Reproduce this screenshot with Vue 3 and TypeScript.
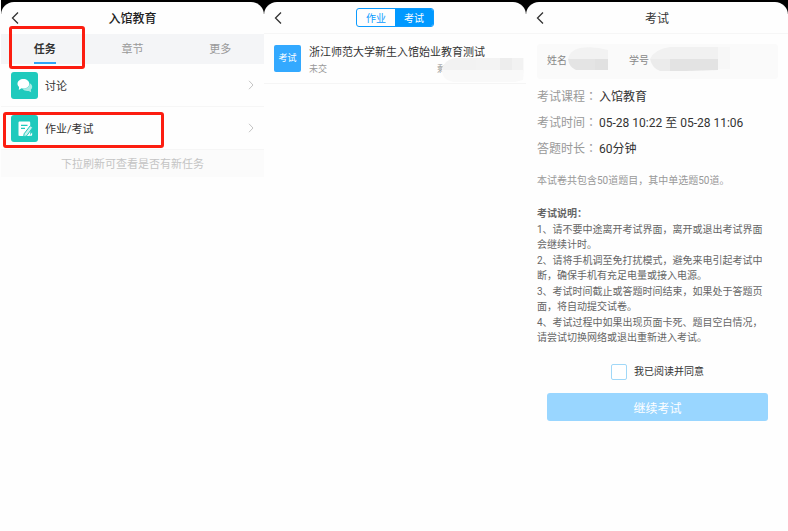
<script setup lang="ts">
import { ref } from 'vue'

interface Detail {
  label: string
  value: string
}

const tabs: string[] = ['任务', '章节', '更多']
const activeTab = ref<string>('任务')
const kinds: string[] = ['作业', '考试']
const activeKind = ref<string>('考试')
const agreed = ref<boolean>(false)

const details: Detail[] = [
  { label: '考试课程', value: '入馆教育' },
  { label: '考试时间', value: '05-28 10:22 至 05-28 11:06' },
  { label: '答题时长', value: '60分钟' },
]

const rules: string[][] = [
  ['1、请不要中途离开考试界面，离开或退出考试界面', '会继续计时。'],
  ['2、请将手机调至免打扰模式，避免来电引起考试中', '断，确保手机有充足电量或接入电源。'],
  ['3、考试时间截止或答题时间结束，如果处于答题页', '面，将自动提交试卷。'],
  ['4、考试过程中如果出现页面卡死、题目空白情况，', '请尝试切换网络或退出重新进入考试。'],
]
</script>

<template>
  <main class="board">
    <section class="phone first">
      <div class="screen">
        <header class="bar">
          <button class="back" type="button" aria-label="返回">
            <svg viewBox="0 0 8 14" width="8" height="14"><path d="M7 1.5 1.5 7 7 12.5" /></svg>
          </button>
          <h1 class="title strong">入馆教育</h1>
        </header>
        <nav class="tabs">
          <button
            v-for="tab in tabs"
            :key="tab"
            type="button"
            class="tab"
            :class="{ active: tab === activeTab }"
            @click="activeTab = tab"
          >
            <span class="tab-text">{{ tab }}</span>
          </button>
          <span class="mark mark-tab"></span>
        </nav>
        <a class="entry" href="#discuss">
          <span class="tile">
            <svg viewBox="0 0 27 27" width="27" height="27">
              <path class="soft" d="M18.8 11.2c1.500.8 2.400 2 2.400 3.500 0 1.200-.5 2.200-1.400 3l.4 2.600-2.500-1.400c-2.600.4-5-.4-6.100-2.100 4 .2 7.100-2 7.200-5.600z" />
              <path class="white" d="M12.400 7c3.300 0 5.900 2.100 5.900 4.800s-2.600 4.800-5.900 4.800c-.7 0-1.300-.1-1.900-.3l-2.700 1.600.3-2.900c-1-.8-1.600-1.900-1.600-3.200C6.500 9.100 9.100 7 12.400 7z" />
            </svg>
          </span>
          <span class="entry-text">讨论</span>
          <svg class="arrow" viewBox="0 0 6 10" width="6" height="10"><path d="M1 .8 5 5 1 9.200" /></svg>
        </a>
        <a class="entry" href="#exam">
          <span class="tile">
            <svg viewBox="0 0 27 27" width="27" height="27">
              <path class="white" d="M8.700 6.500h9.300c.8 0 1.200.4 1.200 1.200v12c0 .8-.4 1.200-1.200 1.200H8.700c-.8 0-1.200-.4-1.200-1.200v-12c0-.8.4-1.200 1.200-1.200z" />
              <path class="teal" d="M10 10.300h6.500M10 13.300h4" />
              <path class="pencil" d="m19.200 10.800 2.500 1.700-5.900 8.200-3.100 1.300.4-3.200z" />
              <path class="white" d="m18.600 20.800 2.500-3.400v2.600c0 .6-.3.800-.8.800z" />
            </svg>
          </span>
          <span class="entry-text">作业/考试</span>
          <svg class="arrow" viewBox="0 0 6 10" width="6" height="10"><path d="M1 .8 5 5 1 9.200" /></svg>
          <span class="mark mark-entry"></span>
        </a>
        <p class="hint">下拉刷新可查看是否有新任务</p>
      </div>
    </section>

    <section class="phone">
      <div class="screen">
        <header class="bar ruled">
          <button class="back" type="button" aria-label="返回">
            <svg viewBox="0 0 8 14" width="8" height="14"><path d="M7 1.500 1.500 7 7 12.500" /></svg>
          </button>
          <div class="switch">
            <button
              v-for="kind in kinds"
              :key="kind"
              type="button"
              class="kind"
              :class="{ on: kind === activeKind }"
              @click="activeKind = kind"
            >{{ kind }}</button>
          </div>
        </header>
        <a class="exam" href="#paper">
          <span class="badge">考试</span>
          <span class="exam-body">
            <span class="exam-name">浙江师范大学新生入馆始业教育测试</span>
            <span class="exam-meta">
              <span>未交</span>
              <span class="remain">剩</span>
            </span>
          </span>
          <svg class="mosaic" viewBox="0 0 82 25" width="82" height="25">
            <path fill="#f9f9f9" d="M12 0h70v12l-1 10-8 2H12Q0 22 0 12 2 2 12 0z" />
            <path fill="#f2f2f2" d="M13 0h21v12H0Q2 2 13 0z" />
            <path fill="#f3f3f3" d="M34 0h24v12H34z" />
            <path fill="#ededed" d="M58 0h12v12H58z" />
            <path fill="#f2f2f2" d="M70 0h11v12H70z" />
          </svg>
        </a>
      </div>
    </section>

    <section class="phone">
      <div class="screen">
        <header class="bar ruled">
          <button class="back" type="button" aria-label="返回">
            <svg viewBox="0 0 8 14" width="8" height="14"><path d="M7 1.500 1.500 7 7 12.500" /></svg>
          </button>
          <h1 class="title">考试</h1>
        </header>
        <div class="content">
          <div class="who">
            <span class="who-item">
              姓名
              <svg viewBox="0 0 40 24" width="40" height="24">
                <path fill="#f2f2f2" d="M12 1q14-2 28 2v9H0Q2 3 12 1z" />
                <path fill="#e4e4e4" d="M0 12h40v11H8Q1 20 0 12z" />
                <path fill="#e1e1e1" d="M27 12h13v11H27z" />
              </svg>
            </span>
            <span class="who-item">
              学号
              <svg viewBox="0 0 80 24" width="80" height="24">
                <path fill="#f1f1f1" d="M20 0h48v12H0Q5 2 20 0z" />
                <path fill="#f7f7f7" d="M68 0h12v22H68z" />
                <path fill="#ebebeb" d="M0 12h20v12H10Q2 21 0 12z" />
                <path fill="#e3e3e3" d="M20 12h48v11l-32 1H20z" />
              </svg>
            </span>
          </div>
          <dl class="details">
            <div v-for="item in details" :key="item.label" class="detail">
              <dt>{{ item.label }}<span class="colon">：</span></dt>
              <dd>{{ item.value }}</dd>
            </div>
          </dl>
          <p class="summary">本试卷共包含50道题目，其中单选题50道。</p>
          <div class="rules">
            <h2>考试说明：</h2>
            <p v-for="rule in rules" :key="rule[0]">
              <span v-for="line in rule" :key="line">{{ line }}</span>
            </p>
          </div>
          <label class="agree">
            <input v-model="agreed" type="checkbox" />
            <span>我已阅读并同意</span>
          </label>
          <button class="go" type="button">继续考试</button>
        </div>
      </div>
    </section>
  </main>
</template>

<style>
body {
  margin: 0;
  background: #fefefe;
}
</style>

<style scoped>
* {
  box-sizing: border-box;
}
.board {
  display: grid;
  grid-template-columns: 264fr 262fr 262fr;
  min-height: 100vh;
  font-family: Roboto, "Noto Sans CJK SC", sans-serif;
  color: #333;
}
button {
  font: inherit;
  color: inherit;
  border: 0;
  padding: 0;
  background: none;
}
a {
  color: inherit;
  text-decoration: none;
}
h1, h2, p, dl, dd {
  margin: 0;
}
svg {
  display: block;
  flex: none;
}
.phone {
  background: linear-gradient(#000 14px, #fefefe 14px);
  padding-top: 2px;
}
.first {
  margin-left: 1px;
}
.screen {
  min-height: 100%;
  background: #fefefe;
  border-radius: 13px 13px 0 0;
}
.bar {
  display: grid;
  grid-template-columns: 28px 1fr 28px;
  align-items: center;
  height: 32px;
}
.ruled {
  border-bottom: 1px solid #f6f6f6;
}
.back {
  padding-left: 10px;
}
.back path {
  fill: none;
  stroke: #333;
  stroke-width: 1.300;
}
.title {
  padding-top: 2px;
  font-size: 12px;
  line-height: 18px;
  font-weight: 400;
  text-align: center;
}
.strong {
  font-weight: 500;
  color: #222;
}
.tabs {
  position: relative;
  display: grid;
  grid-template-columns: repeat(3, 1fr);
  height: 30px;
  background: #f4f5f7;
  font-size: 11px;
  color: #999;
}
.tab {
  display: flex;
  justify-content: center;
}
.tab-text {
  height: 30px;
  line-height: 32px;
}
.active .tab-text {
  font-weight: 700;
  color: #333;
  border-bottom: 2px solid #2fa5f8;
}
.mark {
  position: absolute;
  border: 3px solid #fc1d10;
  border-radius: 3px;
  pointer-events: none;
}
.mark-tab {
  left: 8px;
  top: -8px;
  width: 76px;
  height: 43px;
}
.mark-entry {
  left: 2px;
  top: 5px;
  width: 161px;
  height: 36px;
}
.entry {
  position: relative;
  display: flex;
  align-items: center;
  gap: 7px;
  height: 43px;
  padding: 0 10px;
  border-bottom: 1px solid #f6f6f6;
  font-size: 11px;
}
.tile {
  border-radius: 3px;
  background: #1fcabd;
}
.white {
  fill: #fff;
}
.soft {
  fill: #a8ebe4;
}
.teal {
  fill: none;
  stroke: #1fcabd;
  stroke-width: 1.300;
}
.pencil {
  fill: #c9f3ef;
  stroke: #1fcabd;
  stroke-width: 1;
}
.entry-text {
  flex: 1;
}
.arrow path {
  fill: none;
  stroke: #c4c4c4;
}
.hint {
  padding-top: 2px;
  background: #fbfbfb;
  color: #c4c4c4;
  font-size: 11px;
  line-height: 25px;
  text-align: center;
}
.switch {
  display: flex;
  justify-self: center;
  width: 78px;
  height: 19px;
  border: 1px solid #0c9bff;
  border-radius: 3px;
  overflow: hidden;
}
.kind {
  flex: 1;
  font-size: 10px;
  color: #0c9bff;
}
.on {
  background: #0099ff;
  color: #fff;
}
.exam {
  position: relative;
  display: flex;
  align-items: flex-start;
  gap: 8px;
  height: 50px;
  padding: 11px 10px 0;
  border-bottom: 1px solid #f5f5f5;
}
.badge {
  width: 27px;
  height: 27px;
  border-radius: 2px;
  background: #33a9ff;
  color: #fff;
  font-size: 9px;
  line-height: 27px;
  text-align: center;
}
.exam-body {
  display: flex;
  flex: 1;
  flex-direction: column;
}
.exam-name {
  font-size: 11px;
  line-height: 16px;
  white-space: nowrap;
}
.exam-meta {
  display: flex;
  justify-content: space-between;
  padding-right: 70px;
  font-size: 9px;
  line-height: 16px;
  color: #999;
}
.mosaic {
  position: absolute;
  right: 2px;
  top: 24px;
}
.content {
  display: flex;
  flex-direction: column;
  padding: 10px 10px 0 11px;
}
.who {
  display: flex;
  gap: 21px;
  height: 35px;
  padding: 0 10px;
  border-radius: 3px;
  background: #fafafa;
  color: #888;
  font-size: 10px;
}
.who-item {
  display: flex;
  gap: 1px;
  height: 30px;
  align-items: center;
}
.details {
  padding-top: 5px;
  font-size: 12px;
}
.detail {
  display: flex;
  align-items: center;
  gap: 2px;
  height: 26px;
  line-height: 18px;
}
dt {
  color: #999;
}
dd {
  white-space: nowrap;
}
.colon {
  font-family: "Noto Sans CJK TC", sans-serif;
  line-height: 1;
}
.summary {
  padding-top: 10px;
  font-size: 10px;
  line-height: 18px;
  color: #999;
}
.rules {
  display: flex;
  flex-direction: column;
  gap: 1px;
  padding-top: 16px;
  color: #666;
  font-size: 10px;
  line-height: 15px;
}
.rules h2 {
  font-size: 10px;
  font-weight: 700;
}
.rules span {
  display: block;
  white-space: nowrap;
}
.agree {
  display: flex;
  align-items: center;
  align-self: center;
  gap: 7px;
  padding-top: 19px;
  font-size: 10px;
  line-height: 16px;
}
.agree input {
  appearance: none;
  width: 16px;
  height: 16px;
  margin: 0;
  border: 1px solid #a0d8f8;
  border-radius: 2px;
  background: #fff;
}
.agree input:checked {
  background: #33a9ff;
}
.go {
  height: 28px;
  margin: 13px 10px 0;
  border-radius: 3px;
  background: #99d6ff;
  color: #fff;
  font-size: 12px;
}
</style>
